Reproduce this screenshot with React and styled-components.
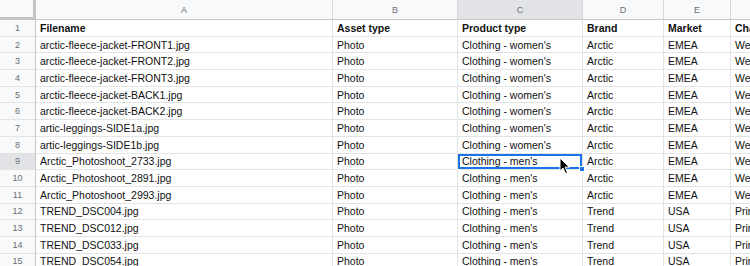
import React from "react";
import styled, { createGlobalStyle } from "styled-components";

const Global = createGlobalStyle`
  html, body { margin: 0; padding: 0; background: #fff; overflow: hidden; }
  body { font-family: "Liberation Sans", Arial, sans-serif; }
`;

const Sheet = styled.div`
  position: relative;
  display: grid;
  grid-template-columns: 36px 297px 125px 125px 81px 67px 110px;
  grid-template-rows: 20px repeat(15, 16.7px);
  width: 841px;
  font-size: 10.5px;
  color: #111;
`;

const Corner = styled.div`
  background: #f8f9fa;
  border-right: 3px solid #c4c7c5;
  border-bottom: 3px solid #c4c7c5;
  box-sizing: border-box;
`;

const ColHead = styled.div`
  background: ${(p) => (p.$active ? "#e1e3e6" : "#f8f9fa")};
  border-right: 1px solid #d6d8da;
  border-bottom: 1px solid #c4c7c5;
  box-sizing: border-box;
  display: flex;
  align-items: center;
  justify-content: center;
  color: #6b6f73;
  font-size: 9px;
`;

const RowHead = styled.div`
  background: ${(p) => (p.$active ? "#e1e3e6" : "#f8f9fa")};
  border-right: 1px solid #c4c7c5;
  border-bottom: 1px solid #e2e3e3;
  box-sizing: border-box;
  display: flex;
  align-items: center;
  justify-content: center;
  color: #6b6f73;
  font-size: 9px;
`;

const Cell = styled.div`
  position: relative;
  border-right: 1px solid #e2e3e3;
  border-bottom: 1px solid #e2e3e3;
  box-sizing: border-box;
  display: flex;
  align-items: center;
  padding: 0 4px;
  white-space: nowrap;
  overflow: hidden;
  font-weight: ${(p) => (p.$bold ? 700 : 400)};
  ${(p) =>
    p.$selected &&
    `
    overflow: visible;
    box-shadow: inset 0 0 0 2px #1a73e8;
    z-index: 2;
  `}
`;

const Handle = styled.span`
  position: absolute;
  right: -3px;
  bottom: -3px;
  width: 6px;
  height: 6px;
  background: #1a73e8;
  border: 1px solid #fff;
  box-sizing: border-box;
`;

const Pointer = styled.svg`
  position: absolute;
  left: 559px;
  top: 157px;
  z-index: 5;
`;

const cols = ["A", "B", "C", "D", "E", "F"];

const rows = [
  ["Filename", "Asset type", "Product type", "Brand", "Market", "Channel"],
  ["arctic-fleece-jacket-FRONT1.jpg", "Photo", "Clothing - women's", "Arctic", "EMEA", "Web"],
  ["arctic-fleece-jacket-FRONT2.jpg", "Photo", "Clothing - women's", "Arctic", "EMEA", "Web"],
  ["arctic-fleece-jacket-FRONT3.jpg", "Photo", "Clothing - women's", "Arctic", "EMEA", "Web"],
  ["arctic-fleece-jacket-BACK1.jpg", "Photo", "Clothing - women's", "Arctic", "EMEA", "Web"],
  ["arctic-fleece-jacket-BACK2.jpg", "Photo", "Clothing - women's", "Arctic", "EMEA", "Web"],
  ["artic-leggings-SIDE1a.jpg", "Photo", "Clothing - women's", "Arctic", "EMEA", "Web"],
  ["artic-leggings-SIDE1b.jpg", "Photo", "Clothing - women's", "Arctic", "EMEA", "Web"],
  ["Arctic_Photoshoot_2733.jpg", "Photo", "Clothing - men's", "Arctic", "EMEA", "Web"],
  ["Arctic_Photoshoot_2891.jpg", "Photo", "Clothing - men's", "Arctic", "EMEA", "Web"],
  ["Arctic_Photoshoot_2993.jpg", "Photo", "Clothing - men's", "Arctic", "EMEA", "Web"],
  ["TREND_DSC004.jpg", "Photo", "Clothing - men's", "Trend", "USA", "Print"],
  ["TREND_DSC012.jpg", "Photo", "Clothing - men's", "Trend", "USA", "Print"],
  ["TREND_DSC033.jpg", "Photo", "Clothing - men's", "Trend", "USA", "Print"],
  ["TREND_DSC054.jpg", "Photo", "Clothing - men's", "Trend", "USA", "Print"],
];

export default function App() {
  return (
    <>
      <Global />
      <Sheet>
        <Corner />
        {cols.map((c) => (
          <ColHead key={c} $active={c === "C"}>
            {c}
          </ColHead>
        ))}
        {rows.map((r, i) => (
          <React.Fragment key={i}>
            <RowHead $active={i === 8}>{i + 1}</RowHead>
            {r.map((v, j) => {
              const sel = i === 8 && j === 2;
              return (
                <Cell key={j} $bold={i === 0} $selected={sel}>
                  {v}
                  {sel && <Handle />}
                </Cell>
              );
            })}
          </React.Fragment>
        ))}
        <Pointer width="12" height="18" viewBox="0 0 12 18">
          <path
            d="M1 1 L1 14 L4 11 L6.5 16.5 L8.5 15.6 L6.1 10.2 L10.3 10.2 Z"
            fill="#000"
            stroke="#fff"
            strokeWidth="1"
            strokeLinejoin="round"
          />
        </Pointer>
      </Sheet>
    </>
  );
}
